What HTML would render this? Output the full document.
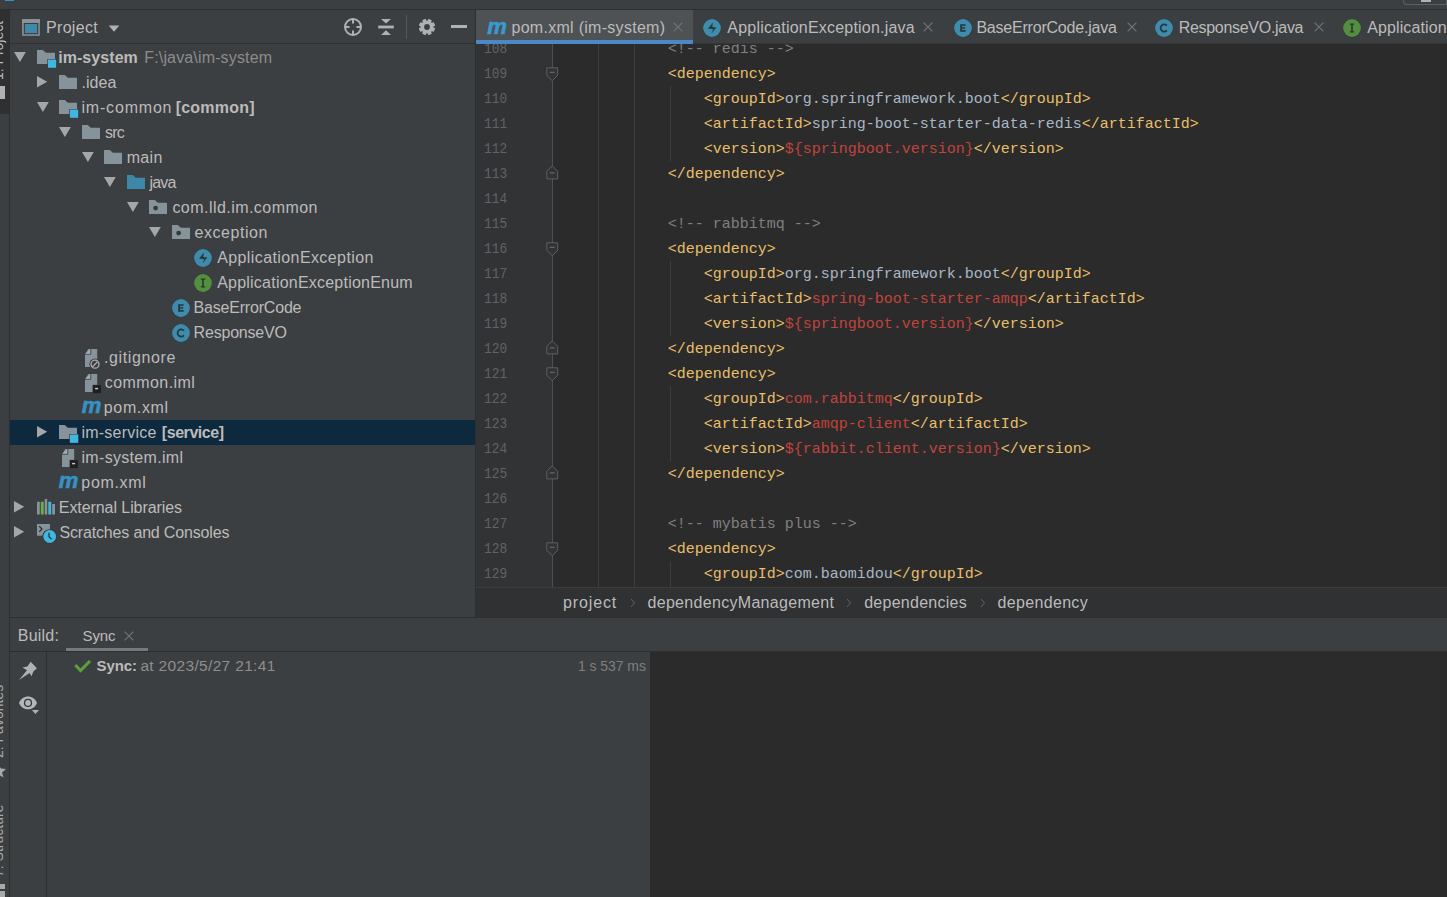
<!DOCTYPE html>
<html><head><meta charset="utf-8">
<style>
*{margin:0;padding:0;box-sizing:border-box}
html,body{width:1447px;height:897px;overflow:hidden;background:#3C3F41;font-family:"Liberation Sans",sans-serif;color:#BBBBBB;position:relative}
.a{position:absolute}
.t{white-space:pre;line-height:normal}
.code{font-family:"Liberation Mono",monospace;font-size:15px;white-space:pre;color:#A9B7C6;line-height:normal}
.ln{font-family:"Liberation Mono",monospace;font-size:15px;white-space:pre;color:#606366;line-height:normal;transform:scaleX(0.858);transform-origin:0 0}
.tg{color:#E8BF6A}.cm{color:#808080}.rd{color:#C2433C}
</style></head><body>
<div class="a" style="left:0px;top:0px;width:1447px;height:9px;background:#3C3F41;"></div>
<div class="a" style="left:0px;top:9px;width:1447px;height:1px;background:#2C2E30;"></div>
<div class="a" style="left:5px;top:0px;width:9px;height:1px;background:#3592C4;"></div>
<div class="a" style="left:1403px;top:0px;width:44px;height:5px;background:none;border:1px solid #5E6060;border-top:none;border-radius:0 0 0 4px;box-sizing:border-box"></div>
<div class="a" style="left:1421px;top:0px;width:10px;height:2px;background:#AFB1B3;"></div>
<div class="a" style="left:0px;top:10px;width:9px;height:887px;background:#3C3F41;"></div>
<div class="a" style="left:0px;top:10px;width:9px;height:104px;background:#2E3032;"></div>
<div class="a" style="left:9px;top:10px;width:1px;height:887px;background:#2C2E30;"></div>
<div class="a" style="left:10px;top:10px;width:465px;height:607px;background:#3C3F41;"></div>
<div class="a" style="left:10px;top:43px;width:465px;height:1px;background:#323232;"></div>
<div class="a" style="left:475px;top:10px;width:1px;height:607px;background:#2C2E30;"></div>
<div class="a t" style="left:-9.97px;top:80px;font-size:14px;color:#BBBBBB;transform-origin:0 0;transform:rotate(-90deg)">1: Project</div>
<div class="a" style="left:0px;top:86px;width:5px;height:13px;background:#AFB1B3;"></div>
<div class="a t" style="left:-9.97px;top:758px;font-size:14px;color:#A9A9A9;transform-origin:0 0;transform:rotate(-90deg)">2: Favorites</div>
<svg class="a" style="left:0px;top:764px;" width="8" height="14" viewBox="0 0 8 14"><path d="M-2,0 L1,4.5 L6,5 L2,8.5 L3.5,13.5 L-2,10.5 Z" fill="#A9A9A9"/></svg>
<div class="a t" style="left:-9.97px;top:877px;font-size:14px;color:#A9A9A9;transform-origin:0 0;transform:rotate(-90deg)">7: Structure</div>
<div class="a" style="left:0px;top:884px;width:5px;height:5px;background:#A9A9A9;"></div>
<div class="a" style="left:0px;top:891px;width:5px;height:6px;background:#A9A9A9;"></div>
<svg class="a" style="left:21px;top:18px;" width="20" height="20" viewBox="0 0 20 20"><rect x="1" y="1.2" width="17.9" height="16.7" fill="#7D878C"/><rect x="1" y="1.2" width="17.9" height="3.5" fill="#8A969C"/><rect x="2.9" y="5" width="14.2" height="11.1" fill="#3A3E41"/><rect x="3.9" y="6" width="12.2" height="9.1" fill="#3E8AA8"/></svg>
<div class="a t" style="left:46.0px;top:18.92px;font-family:'Liberation Sans';font-size:16px;font-weight:400;color:#BBBBBB;letter-spacing:0.325px;">Project</div>
<svg class="a" style="left:108px;top:25px;" width="12" height="7" viewBox="0 0 12 7"><path d="M0.7,0.4 H11.3 L6,6.8 Z" fill="#AFB1B3"/></svg>
<svg class="a" style="left:343px;top:17px;" width="20" height="20" viewBox="0 0 20 20"><circle cx="10" cy="10" r="8" fill="none" stroke="#AFB1B3" stroke-width="2"/><path d="M10,2 V6.5 M10,13.5 V18 M2,10 H6.5 M13.5,10 H18" stroke="#AFB1B3" stroke-width="2"/></svg>
<svg class="a" style="left:377px;top:18px;" width="18" height="18" viewBox="0 0 18 18"><path d="M4,1 H14 L9,5.6 Z M4,17 H14 L9,12.2 Z" fill="#AFB1B3"/><rect x="1.2" y="7.6" width="15.6" height="2.8" fill="#AFB1B3"/></svg>
<div class="a" style="left:406px;top:15px;width:1px;height:24px;background:#55585A;"></div>
<svg class="a" style="left:418px;top:18px;" width="18" height="18" viewBox="0 0 18 18"><g transform="translate(9,9)" fill="#AFB1B3"><rect x="-1.9" y="-8.1" width="3.8" height="4" rx="0.6" transform="rotate(22.5)"/><rect x="-1.9" y="-8.1" width="3.8" height="4" rx="0.6" transform="rotate(67.5)"/><rect x="-1.9" y="-8.1" width="3.8" height="4" rx="0.6" transform="rotate(112.5)"/><rect x="-1.9" y="-8.1" width="3.8" height="4" rx="0.6" transform="rotate(157.5)"/><rect x="-1.9" y="-8.1" width="3.8" height="4" rx="0.6" transform="rotate(202.5)"/><rect x="-1.9" y="-8.1" width="3.8" height="4" rx="0.6" transform="rotate(247.5)"/><rect x="-1.9" y="-8.1" width="3.8" height="4" rx="0.6" transform="rotate(292.5)"/><rect x="-1.9" y="-8.1" width="3.8" height="4" rx="0.6" transform="rotate(337.5)"/><circle r="6.3"/></g><circle cx="9" cy="9" r="2.9" fill="#3C3F41"/></svg>
<div class="a" style="left:451px;top:25px;width:16px;height:3px;background:#AFB1B3;"></div>
<svg class="a" style="left:14.2px;top:52px;" width="12" height="10" viewBox="0 0 12 10"><path d="M0,0 H11.8 L5.9,10 Z" fill="#A6A6A6"/></svg>
<svg class="a" style="left:37px;top:50px;" width="20" height="19" viewBox="0 0 20 19"><path d="M0,0 H5.8 L8.8,2.7 H18 V14 H0 Z" transform="translate(0,0)" fill="#87939A"/><rect x="10.3" y="9" width="9.4" height="9.3" fill="#33363A"/><rect x="10.9" y="9.5" width="8.3" height="8.3" fill="#40B6E0"/></svg>
<div class="a t" style="left:58.2px;top:49.02px;font-family:'Liberation Sans';font-size:16px;font-weight:700;color:#BBBBBB;letter-spacing:0.060px;">im-system</div>
<div class="a t" style="left:144.3px;top:49.02px;font-family:'Liberation Sans';font-size:16px;font-weight:400;color:#8C8C8C;letter-spacing:0.149px;">F:\java\im-system</div>
<svg class="a" style="left:36.7px;top:76.2px;" width="11" height="12" viewBox="0 0 11 12"><path d="M0,0 L10.2,5.8 L0,11.6 Z" fill="#A6A6A6"/></svg>
<svg class="a" style="left:59px;top:75px;" width="20" height="19" viewBox="0 0 20 19"><path d="M0,0 H5.8 L8.8,2.7 H18 V14 H0 Z" transform="translate(0,0)" fill="#87939A"/></svg>
<div class="a t" style="left:81.5px;top:74.02px;font-family:'Liberation Sans';font-size:16px;font-weight:400;color:#BBBBBB;letter-spacing:0.051px;">.idea</div>
<svg class="a" style="left:36.7px;top:102px;" width="12" height="10" viewBox="0 0 12 10"><path d="M0,0 H11.8 L5.9,10 Z" fill="#A6A6A6"/></svg>
<svg class="a" style="left:59px;top:100px;" width="20" height="19" viewBox="0 0 20 19"><path d="M0,0 H5.8 L8.8,2.7 H18 V14 H0 Z" transform="translate(0,0)" fill="#87939A"/><rect x="10.3" y="9" width="9.4" height="9.3" fill="#33363A"/><rect x="10.9" y="9.5" width="8.3" height="8.3" fill="#40B6E0"/></svg>
<div class="a t" style="left:81.5px;top:99.02px;font-family:'Liberation Sans';font-size:16px;font-weight:400;color:#BBBBBB;letter-spacing:0.804px;">im-common</div>
<div class="a t" style="left:175.7px;top:99.02px;font-family:'Liberation Sans';font-size:16px;font-weight:700;color:#BBBBBB;letter-spacing:0.214px;">[common]</div>
<svg class="a" style="left:59.2px;top:127px;" width="12" height="10" viewBox="0 0 12 10"><path d="M0,0 H11.8 L5.9,10 Z" fill="#A6A6A6"/></svg>
<svg class="a" style="left:82px;top:125px;" width="20" height="19" viewBox="0 0 20 19"><path d="M0,0 H5.8 L8.8,2.7 H18 V14 H0 Z" transform="translate(0,0)" fill="#87939A"/></svg>
<div class="a t" style="left:105.0px;top:124.02px;font-family:'Liberation Sans';font-size:16px;font-weight:400;color:#BBBBBB;letter-spacing:-0.764px;">src</div>
<svg class="a" style="left:81.7px;top:152px;" width="12" height="10" viewBox="0 0 12 10"><path d="M0,0 H11.8 L5.9,10 Z" fill="#A6A6A6"/></svg>
<svg class="a" style="left:104px;top:150px;" width="20" height="19" viewBox="0 0 20 19"><path d="M0,0 H5.8 L8.8,2.7 H18 V14 H0 Z" transform="translate(0,0)" fill="#87939A"/></svg>
<div class="a t" style="left:126.7px;top:149.02px;font-family:'Liberation Sans';font-size:16px;font-weight:400;color:#BBBBBB;letter-spacing:0.340px;">main</div>
<svg class="a" style="left:104.2px;top:177px;" width="12" height="10" viewBox="0 0 12 10"><path d="M0,0 H11.8 L5.9,10 Z" fill="#A6A6A6"/></svg>
<svg class="a" style="left:127px;top:175px;" width="20" height="19" viewBox="0 0 20 19"><path d="M0,0 H5.8 L8.8,2.7 H18 V14 H0 Z" transform="translate(0,0)" fill="#3D88A8"/></svg>
<div class="a t" style="left:149.5px;top:174.02px;font-family:'Liberation Sans';font-size:16px;font-weight:400;color:#BBBBBB;letter-spacing:-0.851px;">java</div>
<svg class="a" style="left:126.7px;top:202px;" width="12" height="10" viewBox="0 0 12 10"><path d="M0,0 H11.8 L5.9,10 Z" fill="#A6A6A6"/></svg>
<svg class="a" style="left:149px;top:200px;" width="20" height="19" viewBox="0 0 20 19"><path d="M0,0 H5.8 L8.8,2.7 H18 V14 H0 Z" transform="translate(0,0)" fill="#87939A"/><circle cx="6.6" cy="8.1" r="2.4" fill="#35383A"/></svg>
<div class="a t" style="left:172.4px;top:199.02px;font-family:'Liberation Sans';font-size:16px;font-weight:400;color:#BBBBBB;letter-spacing:0.456px;">com.lld.im.common</div>
<svg class="a" style="left:149.2px;top:227px;" width="12" height="10" viewBox="0 0 12 10"><path d="M0,0 H11.8 L5.9,10 Z" fill="#A6A6A6"/></svg>
<svg class="a" style="left:172px;top:225px;" width="20" height="19" viewBox="0 0 20 19"><path d="M0,0 H5.8 L8.8,2.7 H18 V14 H0 Z" transform="translate(0,0)" fill="#87939A"/><circle cx="6.6" cy="8.1" r="2.4" fill="#35383A"/></svg>
<div class="a t" style="left:194.6px;top:224.02px;font-family:'Liberation Sans';font-size:16px;font-weight:400;color:#BBBBBB;letter-spacing:0.538px;">exception</div>
<svg class="a" style="left:194.2px;top:248.5px;" width="18" height="18" viewBox="0 0 18 18"><circle cx="9" cy="9" r="9.4" fill="#35383A"/><circle cx="9" cy="9" r="8.9" fill="#3E8BAB"/><path d="M9.9,3.5 L9.3,7.9 L13.3,8.6 L8.5,14.6 L10.3,10.0 L5.0,9.8 Z" fill="#26373E"/></svg>
<div class="a t" style="left:217.2px;top:249.02px;font-family:'Liberation Sans';font-size:16px;font-weight:400;color:#BBBBBB;letter-spacing:0.403px;">ApplicationException</div>
<svg class="a" style="left:194.2px;top:273.5px;" width="18" height="18" viewBox="0 0 18 18"><circle cx="9" cy="9" r="9.4" fill="#35383A"/><circle cx="9" cy="9" r="8.9" fill="#538F40"/><path d="M6.8,4.6 H11.2 V5.8 H9.8 V12.2 H11.2 V13.4 H6.8 V12.2 H8.2 V5.8 H6.8 Z" fill="#2A3A25"/></svg>
<div class="a t" style="left:217.2px;top:274.02px;font-family:'Liberation Sans';font-size:16px;font-weight:400;color:#BBBBBB;letter-spacing:0.221px;">ApplicationExceptionEnum</div>
<svg class="a" style="left:172.2px;top:298.5px;" width="18" height="18" viewBox="0 0 18 18"><circle cx="9" cy="9" r="9.4" fill="#35383A"/><circle cx="9" cy="9" r="8.9" fill="#3E8BAB"/><path d="M6.2,5.2 H11.6 V6.8 H8 V8.2 H11.2 V9.7 H8 V11.1 H11.6 V12.7 H6.2 Z" fill="#26373E"/></svg>
<div class="a t" style="left:193.6px;top:299.02px;font-family:'Liberation Sans';font-size:16px;font-weight:400;color:#BBBBBB;letter-spacing:-0.198px;">BaseErrorCode</div>
<svg class="a" style="left:172.2px;top:323.5px;" width="18" height="18" viewBox="0 0 18 18"><circle cx="9" cy="9" r="9.4" fill="#35383A"/><circle cx="9" cy="9" r="8.9" fill="#3E8BAB"/><path d="M11.9,6.6 A3.6,3.7 0 1 0 11.9,11.4" fill="none" stroke="#26373E" stroke-width="1.7"/></svg>
<div class="a t" style="left:193.6px;top:324.02px;font-family:'Liberation Sans';font-size:16px;font-weight:400;color:#BBBBBB;letter-spacing:-0.202px;">ResponseVO</div>
<svg class="a" style="left:82px;top:348.8px;" width="21" height="20" viewBox="0 0 21 20"><path d="M6.3,0 H15.2 V18 H3 V5.6 Z" fill="#87939A"/><path d="M3,5 L8.4,0 V5 Z" fill="#A3ADB2"/><path d="M3,5.3 H8.8 V0" fill="none" stroke="#3C3F41" stroke-width="0.8"/><circle cx="13" cy="15.2" r="5.6" fill="#3C3F41"/><circle cx="13" cy="15.2" r="4" fill="none" stroke="#AFB1B3" stroke-width="1.3"/><path d="M10.5,17.7 L15.5,12.7" stroke="#AFB1B3" stroke-width="1.3"/></svg>
<div class="a t" style="left:104.0px;top:349.02px;font-family:'Liberation Sans';font-size:16px;font-weight:400;color:#BBBBBB;letter-spacing:0.609px;">.gitignore</div>
<svg class="a" style="left:82px;top:373.8px;" width="21" height="20" viewBox="0 0 21 20"><path d="M6.3,0 H15.2 V18 H3 V5.6 Z" fill="#87939A"/><path d="M3,5 L8.4,0 V5 Z" fill="#A3ADB2"/><path d="M3,5.3 H8.8 V0" fill="none" stroke="#3C3F41" stroke-width="0.8"/><rect x="10.5" y="10.8" width="9" height="8.4" fill="#3C3F41"/><rect x="11" y="11.2" width="8" height="7.9" fill="#1E1F20"/><rect x="13.1" y="13.9" width="3" height="1.4" fill="#D0D0D0"/></svg>
<div class="a t" style="left:104.8px;top:374.02px;font-family:'Liberation Sans';font-size:16px;font-weight:400;color:#BBBBBB;letter-spacing:0.424px;">common.iml</div>
<div class="a t" style="left:81.7px;top:392.68px;font-family:'Liberation Sans';font-weight:700;font-style:italic;font-size:22px;color:#3592C4;letter-spacing:0;-webkit-text-stroke:0.6px #3592C4">m</div>
<div class="a t" style="left:103.8px;top:399.02px;font-family:'Liberation Sans';font-size:16px;font-weight:400;color:#BBBBBB;letter-spacing:0.650px;">pom.xml</div>
<div class="a" style="left:10px;top:420px;width:465px;height:25px;background:#0D293E;"></div>
<svg class="a" style="left:36.7px;top:426.2px;" width="11" height="12" viewBox="0 0 11 12"><path d="M0,0 L10.2,5.8 L0,11.6 Z" fill="#A6A6A6"/></svg>
<svg class="a" style="left:59px;top:425px;" width="20" height="19" viewBox="0 0 20 19"><path d="M0,0 H5.8 L8.8,2.7 H18 V14 H0 Z" transform="translate(0,0)" fill="#87939A"/><rect x="10.3" y="9" width="9.4" height="9.3" fill="#33363A"/><rect x="10.9" y="9.5" width="8.3" height="8.3" fill="#40B6E0"/></svg>
<div class="a t" style="left:81.5px;top:424.02px;font-family:'Liberation Sans';font-size:16px;font-weight:400;color:#BBBBBB;letter-spacing:0.212px;">im-service</div>
<div class="a t" style="left:161.8px;top:424.02px;font-family:'Liberation Sans';font-size:16px;font-weight:700;color:#BBBBBB;letter-spacing:-0.437px;">[service]</div>
<svg class="a" style="left:59px;top:448.8px;" width="21" height="20" viewBox="0 0 21 20"><path d="M6.3,0 H15.2 V18 H3 V5.6 Z" fill="#87939A"/><path d="M3,5 L8.4,0 V5 Z" fill="#A3ADB2"/><path d="M3,5.3 H8.8 V0" fill="none" stroke="#3C3F41" stroke-width="0.8"/><rect x="10.5" y="10.8" width="9" height="8.4" fill="#3C3F41"/><rect x="11" y="11.2" width="8" height="7.9" fill="#1E1F20"/><rect x="13.1" y="13.9" width="3" height="1.4" fill="#D0D0D0"/></svg>
<div class="a t" style="left:81.5px;top:449.02px;font-family:'Liberation Sans';font-size:16px;font-weight:400;color:#BBBBBB;letter-spacing:0.316px;">im-system.iml</div>
<div class="a t" style="left:58.7px;top:467.68px;font-family:'Liberation Sans';font-weight:700;font-style:italic;font-size:22px;color:#3592C4;letter-spacing:0;-webkit-text-stroke:0.6px #3592C4">m</div>
<div class="a t" style="left:81.3px;top:474.02px;font-family:'Liberation Sans';font-size:16px;font-weight:400;color:#BBBBBB;letter-spacing:0.684px;">pom.xml</div>
<svg class="a" style="left:14.2px;top:501.2px;" width="11" height="12" viewBox="0 0 11 12"><path d="M0,0 L10.2,5.8 L0,11.6 Z" fill="#A6A6A6"/></svg>
<svg class="a" style="left:37px;top:498.9px;" width="18" height="16" viewBox="0 0 18 16"><rect x="0" y="2.8" width="2.8" height="12.7" fill="#87939A"/><rect x="3.8" y="2.8" width="2.9" height="12.7" fill="#62B543"/><rect x="7.7" y="0" width="2.5" height="15.5" fill="#87939A"/><rect x="11.3" y="2.8" width="2.9" height="12.7" fill="#40B6E0"/><rect x="15.2" y="5" width="2.8" height="10.5" fill="#87939A"/></svg>
<div class="a t" style="left:58.8px;top:499.02px;font-family:'Liberation Sans';font-size:16px;font-weight:400;color:#BBBBBB;letter-spacing:-0.071px;">External Libraries</div>
<svg class="a" style="left:14.2px;top:526.2px;" width="11" height="12" viewBox="0 0 11 12"><path d="M0,0 L10.2,5.8 L0,11.6 Z" fill="#A6A6A6"/></svg>
<svg class="a" style="left:37px;top:524px;" width="21" height="21" viewBox="0 0 21 21"><rect x="0" y="0" width="13" height="11.7" fill="#87939A"/><path d="M2.2,2.2 L5,5 L2.2,7.8" fill="none" stroke="#2B2B2B" stroke-width="1.2"/><circle cx="12.7" cy="12.5" r="7.3" fill="#35383A"/><circle cx="12.7" cy="12.5" r="6.4" fill="#40B6E0"/><path d="M12,8.8 V12.8 L14.6,15.3" fill="none" stroke="#1F3A45" stroke-width="1.3"/></svg>
<div class="a t" style="left:59.5px;top:524.02px;font-family:'Liberation Sans';font-size:16px;font-weight:400;color:#BBBBBB;letter-spacing:-0.168px;">Scratches and Consoles</div>
<div class="a" style="left:476px;top:10px;width:971px;height:34px;background:#3C3F41;"></div>
<div class="a" style="left:476px;top:10px;width:217px;height:30px;background:#4E5254;"></div>
<div class="a" style="left:476px;top:40px;width:217px;height:4px;background:#4A88C7;"></div>
<div class="a" style="left:693px;top:43px;width:754px;height:1px;background:#343638;"></div>
<div class="a" style="left:476px;top:44px;width:971px;height:543px;background:#2B2B2B;"></div>
<div class="a" style="left:476px;top:44px;width:76px;height:543px;background:#313335;"></div>
<div class="a" style="left:552px;top:44px;width:1px;height:543px;background:#4D5052;"></div>
<div class="a t" style="left:487.3px;top:14.18px;font-family:'Liberation Sans';font-weight:700;font-style:italic;font-size:22px;color:#389AD0;letter-spacing:0;-webkit-text-stroke:0.6px #389AD0">m</div>
<div class="a t" style="left:511.5px;top:18.52px;font-family:'Liberation Sans';font-size:16px;font-weight:400;color:#BBBBBB;letter-spacing:0.283px;">pom.xml (im-system)</div>
<svg class="a" style="left:673px;top:22.2px;" width="10" height="10" viewBox="0 0 10 10"><path d="M0.6,0.6 L9.4,9.4 M9.4,0.6 L0.6,9.4" stroke="#707274" stroke-width="1.2"/></svg>
<svg class="a" style="left:703px;top:19px;" width="18" height="18" viewBox="0 0 18 18"><circle cx="9" cy="9" r="9.4" fill="#35383A"/><circle cx="9" cy="9" r="8.9" fill="#3E8BAB"/><path d="M9.9,3.5 L9.3,7.9 L13.3,8.6 L8.5,14.6 L10.3,10.0 L5.0,9.8 Z" fill="#26373E"/></svg>
<div class="a t" style="left:727.3px;top:18.52px;font-family:'Liberation Sans';font-size:16px;font-weight:400;color:#BBBBBB;letter-spacing:0.211px;">ApplicationException.java</div>
<svg class="a" style="left:923px;top:22.2px;" width="10" height="10" viewBox="0 0 10 10"><path d="M0.6,0.6 L9.4,9.4 M9.4,0.6 L0.6,9.4" stroke="#707274" stroke-width="1.2"/></svg>
<svg class="a" style="left:953.5px;top:19px;" width="18" height="18" viewBox="0 0 18 18"><circle cx="9" cy="9" r="9.4" fill="#35383A"/><circle cx="9" cy="9" r="8.9" fill="#3E8BAB"/><path d="M6.2,5.2 H11.6 V6.8 H8 V8.2 H11.2 V9.7 H8 V11.1 H11.6 V12.7 H6.2 Z" fill="#26373E"/></svg>
<div class="a t" style="left:976.4px;top:18.52px;font-family:'Liberation Sans';font-size:16px;font-weight:400;color:#BBBBBB;letter-spacing:-0.210px;">BaseErrorCode.java</div>
<svg class="a" style="left:1126.8px;top:22.2px;" width="10" height="10" viewBox="0 0 10 10"><path d="M0.6,0.6 L9.4,9.4 M9.4,0.6 L0.6,9.4" stroke="#707274" stroke-width="1.2"/></svg>
<svg class="a" style="left:1155.2px;top:19px;" width="18" height="18" viewBox="0 0 18 18"><circle cx="9" cy="9" r="9.4" fill="#35383A"/><circle cx="9" cy="9" r="8.9" fill="#3E8BAB"/><path d="M11.9,6.6 A3.6,3.7 0 1 0 11.9,11.4" fill="none" stroke="#26373E" stroke-width="1.7"/></svg>
<div class="a t" style="left:1178.7px;top:18.52px;font-family:'Liberation Sans';font-size:16px;font-weight:400;color:#BBBBBB;letter-spacing:-0.297px;">ResponseVO.java</div>
<svg class="a" style="left:1313.6px;top:22.2px;" width="10" height="10" viewBox="0 0 10 10"><path d="M0.6,0.6 L9.4,9.4 M9.4,0.6 L0.6,9.4" stroke="#707274" stroke-width="1.2"/></svg>
<svg class="a" style="left:1343.2px;top:19px;" width="18" height="18" viewBox="0 0 18 18"><circle cx="9" cy="9" r="9.4" fill="#35383A"/><circle cx="9" cy="9" r="8.9" fill="#538F40"/><path d="M6.8,4.6 H11.2 V5.8 H9.8 V12.2 H11.2 V13.4 H6.8 V12.2 H8.2 V5.8 H6.8 Z" fill="#2A3A25"/></svg>
<div class="a t" style="left:1367.2px;top:18.52px;font-family:'Liberation Sans';font-size:16px;font-weight:400;color:#BBBBBB;letter-spacing:0.109px;">ApplicationExceptionEnum.java</div>
<div class="a" style="left:598px;top:44px;width:1px;height:543px;background:#3B3D3F;"></div>
<div class="a" style="left:634px;top:44px;width:1px;height:543px;background:#3B3D3F;"></div>
<div class="a" style="left:670px;top:85.5px;width:1px;height:75.0px;background:#3B3D3F;"></div>
<div class="a" style="left:670px;top:260.5px;width:1px;height:75.0px;background:#3B3D3F;"></div>
<div class="a" style="left:670px;top:385.5px;width:1px;height:75.0px;background:#3B3D3F;"></div>
<div class="a" style="left:670px;top:560.5px;width:1px;height:26.5px;background:#3B3D3F;"></div>
<div class="a" style="left:476px;top:44px;width:971px;height:543px;overflow:hidden">
<div class="a code" style="left:119.70000000000005px;top:-3.49px">        <span class="cm">&lt;!-- redis --&gt;</span></div>
<div class="a ln" style="left:7.54px;top:-3.49px">108</div>
<div class="a code" style="left:119.70000000000005px;top:21.51px">        <span class="tg">&lt;dependency&gt;</span></div>
<div class="a ln" style="left:7.54px;top:21.51px">109</div>
<div class="a code" style="left:119.70000000000005px;top:46.51px">            <span class="tg">&lt;groupId&gt;</span>org.springframework.boot<span class="tg">&lt;/groupId&gt;</span></div>
<div class="a ln" style="left:7.54px;top:46.51px">110</div>
<div class="a code" style="left:119.70000000000005px;top:71.51px">            <span class="tg">&lt;artifactId&gt;</span>spring-boot-starter-data-redis<span class="tg">&lt;/artifactId&gt;</span></div>
<div class="a ln" style="left:7.54px;top:71.51px">111</div>
<div class="a code" style="left:119.70000000000005px;top:96.51px">            <span class="tg">&lt;version&gt;</span><span class="rd">${springboot.version}</span><span class="tg">&lt;/version&gt;</span></div>
<div class="a ln" style="left:7.54px;top:96.51px">112</div>
<div class="a code" style="left:119.70000000000005px;top:121.51px">        <span class="tg">&lt;/dependency&gt;</span></div>
<div class="a ln" style="left:7.54px;top:121.51px">113</div>
<div class="a code" style="left:119.70000000000005px;top:146.51px"></div>
<div class="a ln" style="left:7.54px;top:146.51px">114</div>
<div class="a code" style="left:119.70000000000005px;top:171.51px">        <span class="cm">&lt;!-- rabbitmq --&gt;</span></div>
<div class="a ln" style="left:7.54px;top:171.51px">115</div>
<div class="a code" style="left:119.70000000000005px;top:196.51px">        <span class="tg">&lt;dependency&gt;</span></div>
<div class="a ln" style="left:7.54px;top:196.51px">116</div>
<div class="a code" style="left:119.70000000000005px;top:221.51px">            <span class="tg">&lt;groupId&gt;</span>org.springframework.boot<span class="tg">&lt;/groupId&gt;</span></div>
<div class="a ln" style="left:7.54px;top:221.51px">117</div>
<div class="a code" style="left:119.70000000000005px;top:246.51px">            <span class="tg">&lt;artifactId&gt;</span><span class="rd">spring-boot-starter-amqp</span><span class="tg">&lt;/artifactId&gt;</span></div>
<div class="a ln" style="left:7.54px;top:246.51px">118</div>
<div class="a code" style="left:119.70000000000005px;top:271.51px">            <span class="tg">&lt;version&gt;</span><span class="rd">${springboot.version}</span><span class="tg">&lt;/version&gt;</span></div>
<div class="a ln" style="left:7.54px;top:271.51px">119</div>
<div class="a code" style="left:119.70000000000005px;top:296.51px">        <span class="tg">&lt;/dependency&gt;</span></div>
<div class="a ln" style="left:7.54px;top:296.51px">120</div>
<div class="a code" style="left:119.70000000000005px;top:321.51px">        <span class="tg">&lt;dependency&gt;</span></div>
<div class="a ln" style="left:7.54px;top:321.51px">121</div>
<div class="a code" style="left:119.70000000000005px;top:346.51px">            <span class="tg">&lt;groupId&gt;</span><span class="rd">com.rabbitmq</span><span class="tg">&lt;/groupId&gt;</span></div>
<div class="a ln" style="left:7.54px;top:346.51px">122</div>
<div class="a code" style="left:119.70000000000005px;top:371.51px">            <span class="tg">&lt;artifactId&gt;</span><span class="rd">amqp-client</span><span class="tg">&lt;/artifactId&gt;</span></div>
<div class="a ln" style="left:7.54px;top:371.51px">123</div>
<div class="a code" style="left:119.70000000000005px;top:396.51px">            <span class="tg">&lt;version&gt;</span><span class="rd">${rabbit.client.version}</span><span class="tg">&lt;/version&gt;</span></div>
<div class="a ln" style="left:7.54px;top:396.51px">124</div>
<div class="a code" style="left:119.70000000000005px;top:421.51px">        <span class="tg">&lt;/dependency&gt;</span></div>
<div class="a ln" style="left:7.54px;top:421.51px">125</div>
<div class="a code" style="left:119.70000000000005px;top:446.51px"></div>
<div class="a ln" style="left:7.54px;top:446.51px">126</div>
<div class="a code" style="left:119.70000000000005px;top:471.51px">        <span class="cm">&lt;!-- mybatis plus --&gt;</span></div>
<div class="a ln" style="left:7.54px;top:471.51px">127</div>
<div class="a code" style="left:119.70000000000005px;top:496.51px">        <span class="tg">&lt;dependency&gt;</span></div>
<div class="a ln" style="left:7.54px;top:496.51px">128</div>
<div class="a code" style="left:119.70000000000005px;top:521.51px">            <span class="tg">&lt;groupId&gt;</span>com.baomidou<span class="tg">&lt;/groupId&gt;</span></div>
<div class="a ln" style="left:7.54px;top:521.51px">129</div>
</div>
<svg class="a" style="left:546px;top:67px;" width="13" height="16" viewBox="0 0 13 16"><path d="M0.8,0.8 H11.7 V8.2 L6.25,13.8 L0.8,8.2 Z" fill="#313335" stroke="#5D6063" stroke-width="1"/><path d="M3.8,5.3 H8.7" stroke="#6A6E71" stroke-width="1.1"/></svg>
<svg class="a" style="left:546px;top:242px;" width="13" height="16" viewBox="0 0 13 16"><path d="M0.8,0.8 H11.7 V8.2 L6.25,13.8 L0.8,8.2 Z" fill="#313335" stroke="#5D6063" stroke-width="1"/><path d="M3.8,5.3 H8.7" stroke="#6A6E71" stroke-width="1.1"/></svg>
<svg class="a" style="left:546px;top:367px;" width="13" height="16" viewBox="0 0 13 16"><path d="M0.8,0.8 H11.7 V8.2 L6.25,13.8 L0.8,8.2 Z" fill="#313335" stroke="#5D6063" stroke-width="1"/><path d="M3.8,5.3 H8.7" stroke="#6A6E71" stroke-width="1.1"/></svg>
<svg class="a" style="left:546px;top:542px;" width="13" height="16" viewBox="0 0 13 16"><path d="M0.8,0.8 H11.7 V8.2 L6.25,13.8 L0.8,8.2 Z" fill="#313335" stroke="#5D6063" stroke-width="1"/><path d="M3.8,5.3 H8.7" stroke="#6A6E71" stroke-width="1.1"/></svg>
<svg class="a" style="left:546px;top:164.5px;" width="13" height="15" viewBox="0 0 13 15"><path d="M0.8,13.9 H11.7 V6.3 L6.25,0.8 L0.8,6.3 Z" fill="#313335" stroke="#5D6063" stroke-width="1"/><path d="M3.8,7.9 H8.7" stroke="#6A6E71" stroke-width="1.1"/></svg>
<svg class="a" style="left:546px;top:339.5px;" width="13" height="15" viewBox="0 0 13 15"><path d="M0.8,13.9 H11.7 V6.3 L6.25,0.8 L0.8,6.3 Z" fill="#313335" stroke="#5D6063" stroke-width="1"/><path d="M3.8,7.9 H8.7" stroke="#6A6E71" stroke-width="1.1"/></svg>
<svg class="a" style="left:546px;top:464.5px;" width="13" height="15" viewBox="0 0 13 15"><path d="M0.8,13.9 H11.7 V6.3 L6.25,0.8 L0.8,6.3 Z" fill="#313335" stroke="#5D6063" stroke-width="1"/><path d="M3.8,7.9 H8.7" stroke="#6A6E71" stroke-width="1.1"/></svg>
<div class="a" style="left:476px;top:587px;width:971px;height:1px;background:#3A3C3E;"></div>
<div class="a" style="left:476px;top:588px;width:971px;height:29px;background:#2F3133;"></div>
<div class="a t" style="left:563.1px;top:593.52px;font-family:'Liberation Sans';font-size:16px;font-weight:400;color:#BBBBBB;letter-spacing:0.854px;">project</div>
<svg class="a" style="left:630px;top:598px;" width="6" height="10" viewBox="0 0 6 10"><path d="M1,1 L4.5,5 L1,9" fill="none" stroke="#626466" stroke-width="1"/></svg>
<div class="a t" style="left:647.5px;top:593.52px;font-family:'Liberation Sans';font-size:16px;font-weight:400;color:#BBBBBB;letter-spacing:0.309px;">dependencyManagement</div>
<svg class="a" style="left:846px;top:598px;" width="6" height="10" viewBox="0 0 6 10"><path d="M1,1 L4.5,5 L1,9" fill="none" stroke="#626466" stroke-width="1"/></svg>
<div class="a t" style="left:864.2px;top:593.52px;font-family:'Liberation Sans';font-size:16px;font-weight:400;color:#BBBBBB;letter-spacing:0.269px;">dependencies</div>
<svg class="a" style="left:980px;top:598px;" width="6" height="10" viewBox="0 0 6 10"><path d="M1,1 L4.5,5 L1,9" fill="none" stroke="#626466" stroke-width="1"/></svg>
<div class="a t" style="left:997.5px;top:593.52px;font-family:'Liberation Sans';font-size:16px;font-weight:400;color:#BBBBBB;letter-spacing:0.335px;">dependency</div>
<div class="a" style="left:10px;top:617px;width:1437px;height:1px;background:#2C2E30;"></div>
<div class="a" style="left:10px;top:618px;width:1437px;height:33px;background:#3C3F41;"></div>
<div class="a t" style="left:17.8px;top:626.52px;font-family:'Liberation Sans';font-size:16px;font-weight:400;color:#BBBBBB;letter-spacing:0.224px;">Build:</div>
<div class="a t" style="left:82.6px;top:627.42px;font-family:'Liberation Sans';font-size:15px;font-weight:400;color:#BBBBBB;letter-spacing:-0.182px;">Sync</div>
<svg class="a" style="left:124.4px;top:631px;" width="10" height="10" viewBox="0 0 10 10"><path d="M0.6,0.6 L9.4,9.4 M9.4,0.6 L0.6,9.4" stroke="#707274" stroke-width="1.2"/></svg>
<div class="a" style="left:66px;top:648px;width:82px;height:3.4px;background:#747A80;"></div>
<div class="a" style="left:10px;top:651px;width:1437px;height:1px;background:#2C2E30;"></div>
<div class="a" style="left:10px;top:652px;width:36px;height:245px;background:#3C3F41;"></div>
<div class="a" style="left:46px;top:652px;width:1px;height:245px;background:#2C2E30;"></div>
<div class="a" style="left:47px;top:652px;width:603px;height:245px;background:#3C3F41;"></div>
<div class="a" style="left:650px;top:652px;width:797px;height:245px;background:#2B2B2B;"></div>
<svg class="a" style="left:17px;top:660px;" width="22" height="22" viewBox="0 0 22 22"><path d="M13.7,1.7 L19.9,8.3 L16.4,11.5 L14.5,16.2 L12.6,12.9 L2,20 L10,10.2 L5.5,7.6 L10.4,6.6 Z" fill="#AFB1B3"/></svg>
<svg class="a" style="left:18px;top:696px;" width="22" height="19" viewBox="0 0 22 19"><path d="M1,6.9 C4.5,-1.6 15.5,-1.6 19,6.9 C15.5,15.4 4.5,15.4 1,6.9 Z" fill="#B4B6B8"/><circle cx="10" cy="6.9" r="4.1" fill="#35383A"/><circle cx="10" cy="6.9" r="2.8" fill="#B4B6B8"/><path d="M13.9,14.1 H21 L17.45,18 Z" fill="#AFB1B3"/></svg>
<svg class="a" style="left:73px;top:659px;" width="20" height="14" viewBox="0 0 20 14"><path d="M2.2,6 L7.6,11.6 L17,2" fill="none" stroke="#5E9E3F" stroke-width="3"/></svg>
<div class="a t" style="left:96.6px;top:657.42px;font-family:'Liberation Sans';font-size:15px;font-weight:700;color:#BBBBBB;letter-spacing:-0.138px;">Sync:</div>
<div class="a t" style="left:140.4px;top:656.97px;font-family:'Liberation Sans';font-size:15.5px;font-weight:400;color:#8E8E8E;letter-spacing:0.332px;">at 2023/5/27 21:41</div>
<div class="a t" style="left:577.9px;top:658.33px;font-family:'Liberation Sans';font-size:14px;font-weight:400;color:#7E7E7E;letter-spacing:-0.042px;">1 s 537 ms</div>
</body></html>
